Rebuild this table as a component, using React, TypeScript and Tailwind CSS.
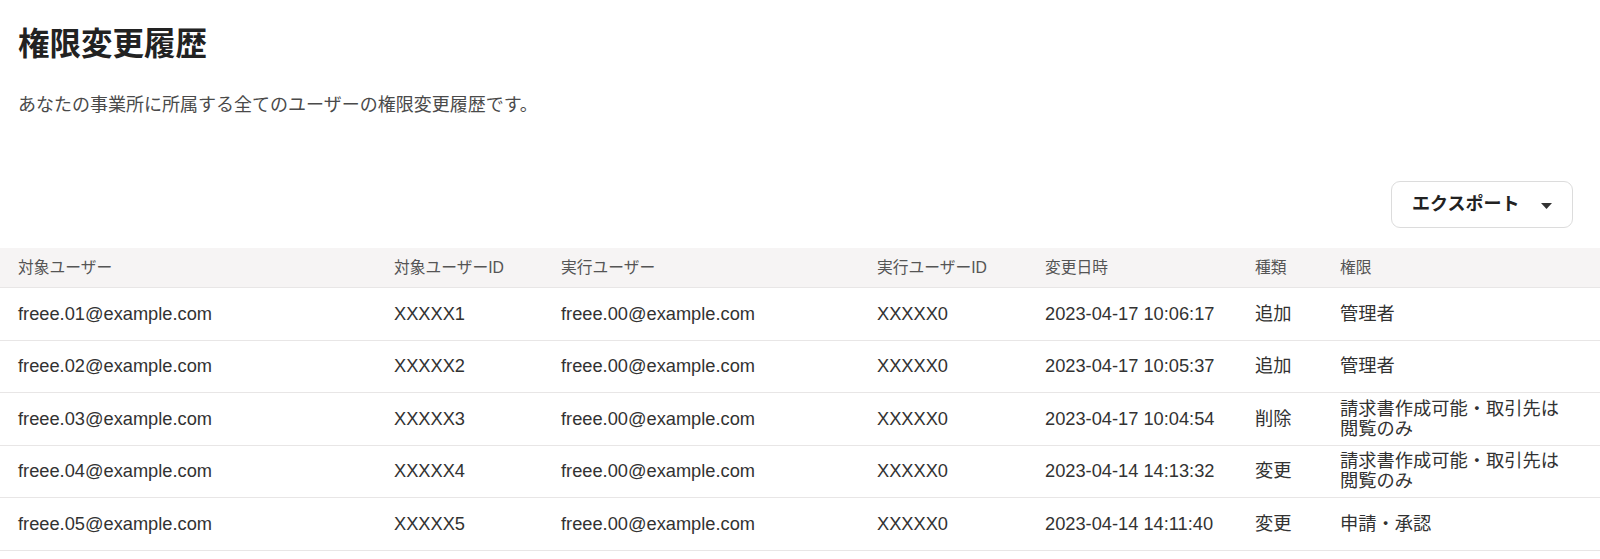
const rows = [
  { user: "freee.01@example.com", userId: "XXXXX1", actor: "freee.00@example.com", actorId: "XXXXX0", at: "2023-04-17 10:06:17", kind: "追加", role: "管理者" },
  { user: "freee.02@example.com", userId: "XXXXX2", actor: "freee.00@example.com", actorId: "XXXXX0", at: "2023-04-17 10:05:37", kind: "追加", role: "管理者" },
  { user: "freee.03@example.com", userId: "XXXXX3", actor: "freee.00@example.com", actorId: "XXXXX0", at: "2023-04-17 10:04:54", kind: "削除", role: "請求書作成可能・取引先は閲覧のみ" },
  { user: "freee.04@example.com", userId: "XXXXX4", actor: "freee.00@example.com", actorId: "XXXXX0", at: "2023-04-14 14:13:32", kind: "変更", role: "請求書作成可能・取引先は閲覧のみ" },
  { user: "freee.05@example.com", userId: "XXXXX5", actor: "freee.00@example.com", actorId: "XXXXX0", at: "2023-04-14 14:11:40", kind: "変更", role: "申請・承認" },
];

const headers = ["対象ユーザー", "対象ユーザーID", "実行ユーザー", "実行ユーザーID", "変更日時", "種類", "権限"];

const cols = "grid grid-cols-[376px_167px_316px_168px_210px_85px_1fr]";

export default function App() {
  return (
    <div className="min-h-[559px] bg-white pt-[21px] text-[#323232] font-['Liberation_Sans','Noto_Sans_CJK_JP',sans-serif]">
      <div className="px-[18px]">
        <h1 className="text-[31.5px] font-bold leading-[47px] text-[#222]">権限変更履歴</h1>
        <p className="mt-[24px] text-[18px] leading-[27px] text-[#4a4a4a]">
          あなたの事業所に所属する全てのユーザーの権限変更履歴です。
        </p>
      </div>

      <div className="mt-[62px] flex justify-end pr-[27px]">
        <button className="flex h-[47px] w-[182px] items-center justify-between rounded-[9px] border border-[#dcdcdc] bg-white pl-[20px] pr-[20px] text-[18px] font-bold text-[#222]">
          <span>エクスポート</span>
          <svg width="11" height="6" viewBox="0 0 11 6" className="mt-[2px]">
            <polygon points="0,0 11,0 5.5,6" fill="#333" />
          </svg>
        </button>
      </div>

      <div className="mt-[20px]">
        <div className={`${cols} h-[40px] items-center border-b border-[#e8e6e6] bg-[#f6f4f4] text-[15.75px] text-[#555]`}>
          {headers.map((h) => (
            <div key={h} className="pl-[18px]">{h}</div>
          ))}
        </div>
        {rows.map((r) => (
          <div
            key={r.user}
            className={`${cols} h-[52.5px] items-center border-b border-[#e8e6e6] text-[18.25px] leading-[20px]`}
          >
            <div className="pl-[18px]">{r.user}</div>
            <div className="pl-[18px]">{r.userId}</div>
            <div className="pl-[18px]">{r.actor}</div>
            <div className="pl-[18px]">{r.actorId}</div>
            <div className="pl-[18px]">{r.at}</div>
            <div className="pl-[18px]">{r.kind}</div>
            <div className="pl-[18px]">
              <div className="max-w-[228px]">{r.role}</div>
            </div>
          </div>
        ))}
      </div>
    </div>
  );
}
